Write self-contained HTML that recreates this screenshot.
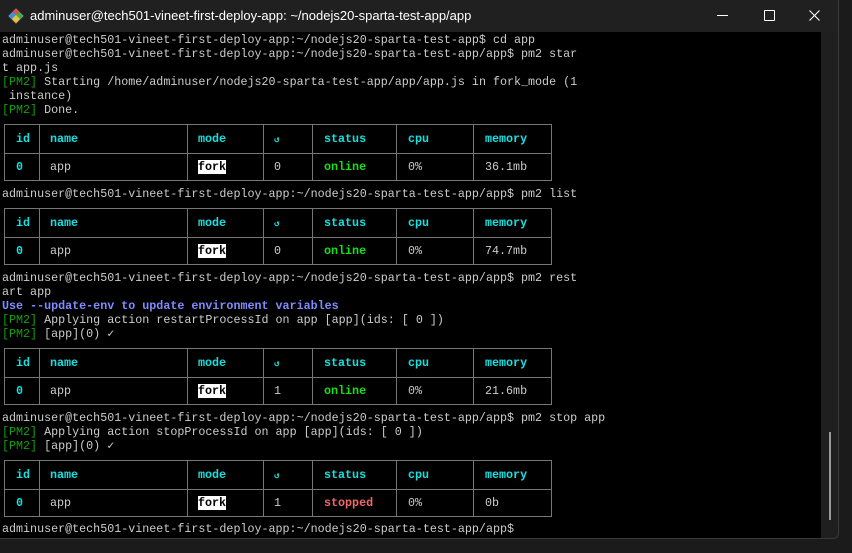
<!DOCTYPE html>
<html><head><meta charset="utf-8"><style>
html,body{margin:0;padding:0;}
body{width:852px;height:553px;background:#1b1b1b;position:relative;overflow:hidden;font-family:"Liberation Mono",monospace;}
#win{position:absolute;left:0;top:0;width:838px;height:538px;background:#1f1f1f;border-right:1px solid #3a3a3a;border-bottom:1px solid #3a3a3a;border-bottom-right-radius:6px;overflow:hidden;}
#title{position:absolute;left:0;top:0;width:838px;height:32px;background:#202020;}
#title .t{position:absolute;left:30px;top:8px;font:13px "Liberation Sans",sans-serif;color:#fff;}
#term{position:absolute;left:0;top:32px;width:821px;height:506px;background:#000;}
#sb{position:absolute;left:829px;top:432px;width:2px;height:88px;background:#9a9a9a;}
.l{position:absolute;left:2px;font-size:11.7px;color:#cccccc;white-space:pre;line-height:14px;height:14px;}
.g{color:#13a10e}
.b{color:#7f8cff;font-weight:bold}
.tb{position:absolute;left:4px;width:546px;border:1px solid #767676;}
.tb .m{position:absolute;left:0;right:0;height:1px;background:#767676;}
.tb .v{position:absolute;top:0;bottom:0;width:1px;background:#767676;}
.c{position:absolute;font-size:11.7px;line-height:14px;white-space:pre;color:#cccccc;}
.h{color:#17e0e0;font-weight:bold;}
.fork{background:#fff;color:#000;font-weight:bold;}
.on{color:#16e016;font-weight:bold}
.st{color:#f06868;font-weight:bold}
</style></head><body>
<div id="win">
<div id="title">
<svg style="position:absolute;left:8px;top:8px" width="16" height="16" viewBox="0 0 16 16">
<rect x="2.5" y="2.5" width="11" height="11" transform="rotate(45 8 8)" fill="#888"/>
<polygon points="8,1 12,5 8,9 4,5" fill="#e84a3a"/>
<polygon points="1,8 5,4 9,8 5,12" fill="#3a8ee8"/>
<polygon points="15,8 11,4 7,8 11,12" fill="#3ab04a"/>
<polygon points="8,15 4,11 8,7 12,11" fill="#e8c43a"/>
</svg>
<div class="t">adminuser@tech501-vineet-first-deploy-app: ~/nodejs20-sparta-test-app/app</div>
<div style="position:absolute;left:717px;top:15px;width:11px;height:1px;background:#fff"></div>
<div style="position:absolute;left:764px;top:10px;width:9px;height:9px;border:1px solid #fff;border-radius:1px"></div>
<svg style="position:absolute;left:809px;top:10px" width="11" height="11" viewBox="0 0 11 11"><path d="M0.5 0.5L10.5 10.5M10.5 0.5L0.5 10.5" stroke="#fff" stroke-width="1.1"/></svg>
</div>
<div id="term"></div>
<div id="sb"></div>

<div class="l" style="top:33px">adminuser@tech501-vineet-first-deploy-app:~/nodejs20-sparta-test-app$ cd app</div>
<div class="l" style="top:47px">adminuser@tech501-vineet-first-deploy-app:~/nodejs20-sparta-test-app/app$ pm2 star</div>
<div class="l" style="top:61px">t app.js</div>
<div class="l" style="top:75px"><span class="g">[PM2]</span> Starting /home/adminuser/nodejs20-sparta-test-app/app/app.js in fork_mode (1</div>
<div class="l" style="top:89px"> instance)</div>
<div class="l" style="top:103px"><span class="g">[PM2]</span> Done.</div>

<div class="l" style="top:187px">adminuser@tech501-vineet-first-deploy-app:~/nodejs20-sparta-test-app/app$ pm2 list</div>

<div class="l" style="top:271px">adminuser@tech501-vineet-first-deploy-app:~/nodejs20-sparta-test-app/app$ pm2 rest</div>
<div class="l" style="top:285px">art app</div>
<div class="l" style="top:299px"><span class="b">Use --update-env to update environment variables</span></div>
<div class="l" style="top:313px"><span class="g">[PM2]</span> Applying action restartProcessId on app [app](ids: [ 0 ])</div>
<div class="l" style="top:327px"><span class="g">[PM2]</span> [app](0) ✓</div>

<div class="l" style="top:411px">adminuser@tech501-vineet-first-deploy-app:~/nodejs20-sparta-test-app/app$ pm2 stop app</div>
<div class="l" style="top:425px"><span class="g">[PM2]</span> Applying action stopProcessId on app [app](ids: [ 0 ])</div>
<div class="l" style="top:439px"><span class="g">[PM2]</span> [app](0) ✓</div>

<div class="l" style="top:522px">adminuser@tech501-vineet-first-deploy-app:~/nodejs20-sparta-test-app/app$</div>

<div class="tb" style="top:124px;height:55px">
<div class="m" style="top:28px"></div>
<div class="v" style="left:34px"></div><div class="v" style="left:182px"></div><div class="v" style="left:258px"></div><div class="v" style="left:307px"></div><div class="v" style="left:391px"></div><div class="v" style="left:468px"></div>
<div class="c h" style="left:11px;top:7px">id</div><div class="c h" style="left:45px;top:7px">name</div><div class="c h" style="left:193px;top:7px">mode</div><div class="c h" style="left:269px;top:8px;font-size:9px">↺</div><div class="c h" style="left:319px;top:7px">status</div><div class="c h" style="left:403px;top:7px">cpu</div><div class="c h" style="left:480px;top:7px">memory</div>
<div class="c h" style="left:11px;top:35px">0</div><div class="c" style="left:45px;top:35px">app</div><div class="c fork" style="left:193px;top:35px">fork</div><div class="c" style="left:269px;top:35px">0</div><div class="c on" style="left:319px;top:35px">online</div><div class="c" style="left:403px;top:35px">0%</div><div class="c" style="left:480px;top:35px">36.1mb</div>
</div>

<div class="tb" style="top:208px;height:55px">
<div class="m" style="top:28px"></div>
<div class="v" style="left:34px"></div><div class="v" style="left:182px"></div><div class="v" style="left:258px"></div><div class="v" style="left:307px"></div><div class="v" style="left:391px"></div><div class="v" style="left:468px"></div>
<div class="c h" style="left:11px;top:7px">id</div><div class="c h" style="left:45px;top:7px">name</div><div class="c h" style="left:193px;top:7px">mode</div><div class="c h" style="left:269px;top:8px;font-size:9px">↺</div><div class="c h" style="left:319px;top:7px">status</div><div class="c h" style="left:403px;top:7px">cpu</div><div class="c h" style="left:480px;top:7px">memory</div>
<div class="c h" style="left:11px;top:35px">0</div><div class="c" style="left:45px;top:35px">app</div><div class="c fork" style="left:193px;top:35px">fork</div><div class="c" style="left:269px;top:35px">0</div><div class="c on" style="left:319px;top:35px">online</div><div class="c" style="left:403px;top:35px">0%</div><div class="c" style="left:480px;top:35px">74.7mb</div>
</div>

<div class="tb" style="top:348px;height:55px">
<div class="m" style="top:28px"></div>
<div class="v" style="left:34px"></div><div class="v" style="left:182px"></div><div class="v" style="left:258px"></div><div class="v" style="left:307px"></div><div class="v" style="left:391px"></div><div class="v" style="left:468px"></div>
<div class="c h" style="left:11px;top:7px">id</div><div class="c h" style="left:45px;top:7px">name</div><div class="c h" style="left:193px;top:7px">mode</div><div class="c h" style="left:269px;top:8px;font-size:9px">↺</div><div class="c h" style="left:319px;top:7px">status</div><div class="c h" style="left:403px;top:7px">cpu</div><div class="c h" style="left:480px;top:7px">memory</div>
<div class="c h" style="left:11px;top:35px">0</div><div class="c" style="left:45px;top:35px">app</div><div class="c fork" style="left:193px;top:35px">fork</div><div class="c" style="left:269px;top:35px">1</div><div class="c on" style="left:319px;top:35px">online</div><div class="c" style="left:403px;top:35px">0%</div><div class="c" style="left:480px;top:35px">21.6mb</div>
</div>

<div class="tb" style="top:460px;height:55px">
<div class="m" style="top:28px"></div>
<div class="v" style="left:34px"></div><div class="v" style="left:182px"></div><div class="v" style="left:258px"></div><div class="v" style="left:307px"></div><div class="v" style="left:391px"></div><div class="v" style="left:468px"></div>
<div class="c h" style="left:11px;top:7px">id</div><div class="c h" style="left:45px;top:7px">name</div><div class="c h" style="left:193px;top:7px">mode</div><div class="c h" style="left:269px;top:8px;font-size:9px">↺</div><div class="c h" style="left:319px;top:7px">status</div><div class="c h" style="left:403px;top:7px">cpu</div><div class="c h" style="left:480px;top:7px">memory</div>
<div class="c h" style="left:11px;top:35px">0</div><div class="c" style="left:45px;top:35px">app</div><div class="c fork" style="left:193px;top:35px">fork</div><div class="c" style="left:269px;top:35px">1</div><div class="c st" style="left:319px;top:35px">stopped</div><div class="c" style="left:403px;top:35px">0%</div><div class="c" style="left:480px;top:35px">0b</div>
</div>
</div>
</body></html>
